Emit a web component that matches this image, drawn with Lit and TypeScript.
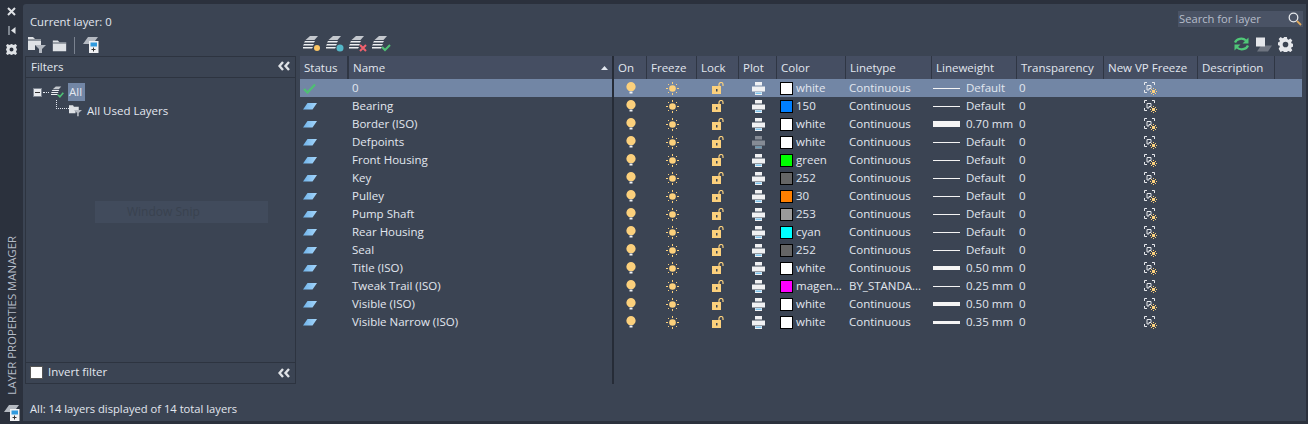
import { LitElement, html, css, svg } from 'lit';
import { customElement } from 'lit/decorators.js';

interface Layer {
  name: string;
  color: string;
  swatch: string;
  linetype?: string;
  weight: string;
  thick: number;
  plotOff?: boolean;
}

const LAYERS: Layer[] = [
  { name: '0', color: 'white', swatch: '#fff', weight: 'Default', thick: 1 },
  { name: 'Bearing', color: '150', swatch: '#007fff', weight: 'Default', thick: 1 },
  { name: 'Border (ISO)', color: 'white', swatch: '#fff', weight: '0.70 mm', thick: 6 },
  { name: 'Defpoints', color: 'white', swatch: '#fff', weight: 'Default', thick: 1, plotOff: true },
  { name: 'Front Housing', color: 'green', swatch: '#00ff00', weight: 'Default', thick: 1 },
  { name: 'Key', color: '252', swatch: '#656565', weight: 'Default', thick: 1 },
  { name: 'Pulley', color: '30', swatch: '#ff7f00', weight: 'Default', thick: 1 },
  { name: 'Pump Shaft', color: '253', swatch: '#9a9a9a', weight: 'Default', thick: 1 },
  { name: 'Rear Housing', color: 'cyan', swatch: '#00ffff', weight: 'Default', thick: 1 },
  { name: 'Seal', color: '252', swatch: '#656565', weight: 'Default', thick: 1 },
  { name: 'Title (ISO)', color: 'white', swatch: '#fff', weight: '0.50 mm', thick: 4 },
  { name: 'Tweak Trail (ISO)', color: 'magen...', swatch: '#ff00ff', linetype: 'BY_STANDA...', weight: '0.25 mm', thick: 1 },
  { name: 'Visible (ISO)', color: 'white', swatch: '#fff', weight: '0.50 mm', thick: 4 },
  { name: 'Visible Narrow (ISO)', color: 'white', swatch: '#fff', weight: '0.35 mm', thick: 3 },
];

const HEAD = ['On', 'Freeze', 'Lock', 'Plot', 'Color', 'Linetype', 'Lineweight', 'Transparency', 'New VP Freeze', 'Description', ''];

const stack = svg`
  <path d="M7 0h8l-3.500 4H2.500z" fill="#c4c8ce"/>
  <path d="M2 5h10l-1 1.500H1zM1 8h10l-1 1.500H0zM0 11h10l-1 1.500H0z" fill="#eceef1"/>`;

const folder = svg`<path d="M1 3h6l2 2h8v11H1z" fill="#dfe2e6"/><path d="M1 6h16" stroke="#3b4453"/>`;

const icons = {
  funnelFolder: html`<svg width="18" height="18" viewBox="0 0 18 18"><path d="M0 1h5l2 2h6v6H7v5H0z" fill="#dfe2e6"/><path d="M0 4h13" stroke="#3b4453"/><path d="M7 9h11l-4 4v4h-3v-4z" fill="#b4b9c1"/></svg>`,
  folder: html`<svg width="15" height="15" viewBox="0 0 18 18">${folder}</svg>`,
  manager: html`<svg width="16" height="16" viewBox="0 0 16 16"><path d="M5 0h10l-3 4h-2L8 7H0z" fill="#b4b9c1"/><rect x="6" y="4" width="9.500" height="12" fill="#f0f1f3"/><rect x="7.500" y="5.500" width="6.500" height="4" fill="#2f9ade"/><path d="M8.500 12.500h4M10.500 10.500v4" stroke="#333"/></svg>`,
  mini: html`<svg width="13" height="13" viewBox="0 0 16 15"><path d="M0 1h5l1 2h6v4H8v4H0z" fill="#dfe2e6"/><path d="M6 7h10l-4 3.500v4h-2v-4z" fill="#b4b9c1"/></svg>`,
  collapse: html`<svg width="13" height="10" viewBox="0 0 13 10"><path d="M5 1 1.500 5 5 9M11 1 7.500 5 11 9" fill="none" stroke="#dfe2e6" stroke-width="2.400"/></svg>`,
  search: html`<svg width="14" height="14" viewBox="0 0 14 14"><circle cx="5.500" cy="5.500" r="4.300" fill="none" stroke="#e6e8ec" stroke-width="1.300"/><path d="m9 9 4 4" stroke="#e0a95c" stroke-width="1.800"/></svg>`,
  refresh: html`<svg width="17" height="16" viewBox="0 0 17 15"><path d="M2 6a6.500 5.500 0 0 1 11-2" fill="none" stroke="#50c878" stroke-width="2.200"/><path d="M15.500 1v6h-6z" fill="#50c878"/><path d="M15 9a6.500 5.500 0 0 1-11 2" fill="none" stroke="#50c878" stroke-width="2.200"/><path d="M1.500 14V8h6z" fill="#50c878"/></svg>`,
  override: html`<svg width="16" height="15" viewBox="0 0 16 14"><path d="M5 8h11l-4 6H1z" fill="#6e7480"/><rect x="0" y="0" width="9" height="9" fill="#e4e6ea"/></svg>`,
  gear: html`<svg width="15" height="15" viewBox="0 0 16 16"><path fill="#e6e8ec" fill-rule="evenodd" d="M6.500 0h3l.4 2.200 1.400.6L13.200 1.500l2.100 2.100-1.300 1.900.6 1.400 2.200.4v3l-2.200.4-.6 1.400 1.300 1.900-2.100 2.100-1.900-1.300-1.400.6-.4 2.200h-3l-.4-2.200-1.400-.6-1.900 1.300L.7 12.400 2 10.500l-.6-1.400L0 8.700v-3l1.400-.2.600-1.400L.7 2.200 2.800.1l1.900 1.300 1.400-.6zM8 5a2.500 2.500 0 1 0 0 6 2.500 2.500 0 0 0 0-6z"/></svg>`,
  close: html`<svg width="9" height="9" viewBox="0 0 9 9"><path d="m1 1 7 7M8 1 1 8" stroke="#dfe2e6" stroke-width="2"/></svg>`,
  pin: html`<svg width="8" height="9" viewBox="0 0 8 9"><path d="M1 0v9" stroke="#9aa0aa" stroke-width="1.500"/><path d="M7.500 1v7L3 4.500z" fill="#dfe2e6"/></svg>`,
  props: html`<svg width="11" height="11" viewBox="0 0 11 11"><path fill="#dfe2e6" fill-rule="evenodd" d="M0 1.500 1.500 0l1.800 1L5.500 0l2.200 1 1.800-1L11 1.500l-1 1.800L11 5.500l-1 2.200 1 1.800L9.500 11l-1.800-1-2.200 1-2.200-1-1.800 1L0 9.500l1-1.800L0 5.500l1-2.200zM5.500 3.500a2 2 0 1 0 0 4 2 2 0 0 0 0-4z"/></svg>`,
  check: html`<svg width="13" height="11" viewBox="0 0 13 11"><path d="m1 6 3.500 3.500L12 1.500" fill="none" stroke="#4fbf74" stroke-width="2.400"/></svg>`,
  layer: html`<svg width="14" height="7" viewBox="0 0 14 7"><defs><linearGradient id="lg" x1="0" x2="1"><stop offset="0" stop-color="#6fb3ea"/><stop offset="1" stop-color="#a5d6fb"/></linearGradient></defs><path d="M4.500 0H14L9.500 6.500H0z" fill="url(#lg)"/></svg>`,
  bulb: html`<svg width="10" height="12" viewBox="0 0 10 12"><path d="M5 0a4.700 4.700 0 0 1 2.500 8.600V9h-5v-.4A4.700 4.700 0 0 1 5 0z" fill="#fbd07c"/><rect x="3.500" y="9.500" width="3" height="2" fill="#f2f3f5"/></svg>`,
  sun: html`<svg width="13" height="13" viewBox="0 0 13 13"><circle cx="6.500" cy="6.500" r="3.300" fill="#fbd07c"/><path d="M6.500 0v2M6.500 11v2M0 6.500h2M11 6.500h2M2 2l1 1M10 10l1 1M2 11l1-1M10 3l1-1" stroke="#fbd07c"/></svg>`,
  lock: html`<svg width="12" height="12" viewBox="0 0 12 12"><path d="M7 4V2.500a2 2 0 0 1 4 0V4" fill="none" stroke="#fbd07c" stroke-width="1.200"/><rect y="4" width="9" height="8" fill="#fbd07c"/><rect x="4" y="7" width="1.500" height="2.500" fill="#3b4453"/></svg>`,
  printer: (off?: boolean) => html`<svg width="13" height="13" viewBox="0 0 13 13"><g fill=${off ? '#858b95' : '#f0f1f3'}><rect x="3" y="0" width="7" height="3.500"/><rect x="0" y="4.500" width="13" height="5"/><rect x="3" y="10" width="7" height="3"/></g><rect x="3.500" y="10.500" width="6" height="1.500" fill=${off ? '#6a9ab5' : '#7cc4ee'}/></svg>`,
  vp: html`<svg width="13" height="13" viewBox="0 0 13 13"><path d="M3 .5H.5V3M8 .5h2.500V3M.5 8v2.500H3" fill="none" stroke="#e6e8ec"/><path d="M3 3.500h4v3H5v1.500H3z" fill="none" stroke="#e6e8ec"/><rect x="8" y="8" width="3" height="3" fill="#fbd07c"/><path d="M7 7h1v1H7zM11 7h1v1h-1zM7 11h1v1H7zM11 11h1v1h-1zM9 6h1v1H9zM9 12h1v1H9zM6 9h1v1H6zM12 9h1v1h-1z" fill="#fbd07c"/></svg>`,
};

const badge = (mark: unknown) => html`<svg width="19" height="16" viewBox="0 0 19 16">${stack}${mark}</svg>`;

@customElement('app-root')
export class AppRoot extends LitElement {
  static styles = css`
    :host {
      display: block;
      width: 1308px;
      height: 424px;
      font-family: 'Open Sans', 'Noto Sans', sans-serif;
      font-size: 11.500px;
      color: #e2e7ef;
      overflow: hidden;
    }

    svg { display: block; flex: none; }

    .window {
      display: flex;
      height: 100%;
      background: #2b313d;
      box-sizing: border-box;
      padding: 4px 2px 3px 0;
    }

    .strip {
      width: 23px;
      flex: none;
      display: flex;
      flex-direction: column;
      align-items: center;
      margin-top: -2px;
      box-sizing: border-box;
    }

    .strip-btn { height: 19px; display: flex; align-items: center; justify-content: center; }

    .strip-title {
      margin-top: auto;
      writing-mode: vertical-rl;
      transform: rotate(180deg);
      font-size: 11.400px;
      color: #b4bbc7;
      white-space: nowrap;
      margin-bottom: 10px;
    }

    .panel {
      flex: 1;
      min-width: 0;
      display: flex;
      flex-direction: column;
      background: #3b4453;
      border-top-left-radius: 3px;
    }

    .body { display: flex; height: 380px; flex: none; }

    .side {
      width: 271px;
      flex: none;
      margin-left: 2px;
      display: flex;
      flex-direction: column;
    }

    .current { height: 32px; padding: 10px 0 0 5px; box-sizing: border-box; font-size: 11.300px; line-height: 16px; }

    .tools { display: flex; align-items: center; height: 18px; padding-left: 3px; gap: 6px; flex: none; }
    .sep { width: 1px; height: 17px; background: #7a828f; margin: 0 2px 0 1px; }

    .filters {
      position: relative;
      flex: 1;
      margin-top: 2px;
      border: 1px solid #2d3440;
      display: flex;
      flex-direction: column;
      min-height: 0;
    }

    .filters-head {
      height: 21px;
      border-bottom: 1px solid #2d3440;
      display: flex;
      align-items: center;
      justify-content: space-between;
      padding: 0 4px 2px 5px;
      box-sizing: border-box;
      flex: none;
    }

    .tree { flex: 1; padding: 5px 0 0 7px; }

    .tree-row { display: flex; align-items: center; height: 18px; }

    .node {
      width: 7px;
      height: 7px;
      background: #e8eaee;
      border: 1px solid #7d8591;
      position: relative;
      margin-right: 1px;
      flex: none;
    }
    .node::after { content: ''; position: absolute; left: 1px; right: 1px; top: 3px; height: 1px; background: #333; }

    .dots { border-top: 1px dotted #e2e7ef; width: 6px; margin-right: 2px; }

    .all-label { background: #7286a5; padding: 0 3px 0 1px; margin-left: 4px; line-height: 18px; }

    .tree-sub { display: flex; align-items: center; height: 18px; padding-left: 23px; }
    .elbow { width: 13px; height: 9px; border-left: 1px dotted #e2e7ef; border-bottom: 1px dotted #e2e7ef; margin-top: -11px; flex: none; box-sizing: border-box; }
    .tree-sub span:last-child { margin-left: 5px; }

    .ghost {
      position: absolute;
      left: 69px;
      top: 144px;
      width: 173px;
      height: 22px;
      background: #414b5c;
      color: #39424f;
      font-size: 12px;
      line-height: 21px;
      padding-left: 32px;
      box-sizing: border-box;
    }

    .invert {
      height: 21px;
      border-top: 1px solid #2d3440;
      display: flex;
      align-items: center;
      padding: 0 4px 1px 4px;
      box-sizing: border-box;
      flex: none;
    }

    .box { width: 11px; height: 11px; background: #fff; border: 1px solid #555; margin-right: 5px; flex: none; }
    .invert-label { margin-bottom: 2px; }
    .invert .grow { flex: 1; }

    .main { flex: 1; min-width: 0; display: flex; flex-direction: column; padding: 0 4px; }

    .top { height: 30px; display: flex; justify-content: flex-end; padding-top: 7px; box-sizing: border-box; margin-right: -1px; }

    .search {
      width: 125px;
      height: 16px;
      background: #4a5365;
      color: #b6bdca;
      display: flex;
      align-items: center;
      justify-content: space-between;
      padding: 0 1px 1px;
      box-sizing: border-box;
      font-size: 11.200px;
    }

    .bar { display: flex; align-items: center; height: 20px; margin-bottom: 2px; padding-left: 3px; gap: 4px; flex: none; }
    .bar .right { margin-left: auto; display: flex; align-items: center; gap: 6px; padding-right: 9px; }

    .table { flex: 1; display: flex; min-height: 0; }

    .pane-l { width: 312px; flex: none; }
    .pane-r { flex: 1; min-width: 0; border-left: 2px solid #262c37; }

    .grid-l { display: grid; grid-template-columns: 49px 263px; }
    .grid-r { display: grid; grid-template-columns: 33px 50px 42px 38px 69px 86px 85px 87px 94px 77px 1fr; }

    .head { height: 23px; background: #454e62; }
    .head > div {
      display: flex;
      align-items: center;
      padding-left: 4px;
      border-right: 1px solid #2f3644;
      box-sizing: border-box;
    }
    .head > div:last-child { border-right: 0; }
    .pane-l .head > div:first-child { border-right: 2px solid #2f3644; }

    .sort { margin-left: auto; margin-right: 4px; }

    .row { height: 18px; align-items: center; }
    .row.on { background: #7286a5; }
    .row > div { display: flex; align-items: center; white-space: nowrap; min-width: 0; height: 18px; box-sizing: border-box; }

    .c-status { padding-left: 3px; }
    .c-name { padding: 0 0 2px 3px; }
    .c-icon { justify-content: center; }
    .c-vp { padding-right: 1px; }
    .c-color { padding: 0 0 0 3px; }
    .c-color span:last-child { margin-bottom: 2px; }
    .swatch { width: 11px; height: 11px; border: 1px solid #000; margin-right: 3px; flex: none; }
    .c-type { padding: 0 0 2px 3px; }
    .c-weight { padding-left: 1px; }
    .c-weight span:last-child { margin-bottom: 2px; }
    .stroke { width: 27px; background: #f4f4f4; margin-right: 6px; flex: none; }
    .c-trans { padding: 0 0 2px 2px; }

    .status { flex: none; height: 37px; padding: 17px 0 0 7px; box-sizing: border-box; line-height: 16px; font-size: 11.200px; }
  `;

  private renderRow(l: Layer, i: number) {
    const on = i === 0;
    return html`
      <div class="grid-r row ${on ? 'on' : ''}">
        <div class="c-icon">${icons.bulb}</div>
        <div class="c-icon">${icons.sun}</div>
        <div class="c-icon">${icons.lock}</div>
        <div class="c-icon">${icons.printer(l.plotOff)}</div>
        <div class="c-color"><span class="swatch" style="background:${l.swatch}"></span><span>${l.color}</span></div>
        <div class="c-type">${l.linetype ?? 'Continuous'}</div>
        <div class="c-weight"><span class="stroke" style="height:${l.thick}px"></span><span>${l.weight}</span></div>
        <div class="c-trans">0</div>
        <div class="c-icon c-vp">${icons.vp}</div>
        <div></div>
        <div></div>
      </div>`;
  }

  render() {
    return html`
      <div class="window">
        <div class="strip">
          <div class="strip-btn">${icons.close}</div>
          <div class="strip-btn">${icons.pin}</div>
          <div class="strip-btn">${icons.props}</div>
          <div class="strip-title">LAYER PROPERTIES MANAGER</div>
          <div>${icons.manager}</div>
        </div>
        <div class="panel">
          <div class="body">
            <div class="side">
              <div class="current">Current layer: 0</div>
              <div class="tools">
                ${icons.funnelFolder}${icons.folder}
                <span class="sep"></span>
                ${icons.manager}
              </div>
              <div class="filters">
                <div class="filters-head">Filters ${icons.collapse}</div>
                <div class="tree">
                  <div class="tree-row">
                    <span class="node"></span><span class="dots"></span>
                    <svg width="13" height="14" viewBox="0 0 19 16">${stack}<path d="m10 12 3 3 5-6" fill="none" stroke="#4fbf74" stroke-width="2.400"/></svg>
                    <span class="all-label">All</span>
                  </div>
                  <div class="tree-sub"><span class="elbow"></span>${icons.mini}<span>All Used Layers</span></div>
                </div>
                <div class="ghost">Window Snip</div>
                <div class="invert"><span class="box"></span><span class="invert-label">Invert filter</span><span class="grow"></span>${icons.collapse}</div>
              </div>
            </div>
            <div class="main">
              <div class="top">
                <div class="search">Search for layer ${icons.search}</div>
              </div>
              <div class="bar">
                ${badge(svg`<circle cx="14" cy="12" r="3" fill="#fbc564"/>`)}
                ${badge(svg`<circle cx="14" cy="12" r="3.500" fill="#54b7c8"/>`)}
                ${badge(svg`<path d="m11 9 6 6M17 9l-6 6" stroke="#f0616d" stroke-width="2"/>`)}
                ${badge(svg`<path d="m10 11 3 3 5-5" fill="none" stroke="#4fbf74" stroke-width="2"/>`)}
                <div class="right">${icons.refresh}${icons.override}${icons.gear}</div>
              </div>
              <div class="table">
                <div class="pane-l">
                  <div class="grid-l head">
                    <div>Status</div>
                    <div>Name
                      <svg class="sort" width="7" height="4" viewBox="0 0 7 4"><path d="M3.500 0 7 4H0z" fill="#e2e7ef"/></svg>
                    </div>
                  </div>
                  ${LAYERS.map((l, i) => html`
                    <div class="grid-l row ${i === 0 ? 'on' : ''}">
                      <div class="c-status">${i === 0 ? icons.check : icons.layer}</div>
                      <div class="c-name">${l.name}</div>
                    </div>`)}
                </div>
                <div class="pane-r">
                  <div class="grid-r head">${HEAD.map((h) => html`<div>${h}</div>`)}</div>
                  ${LAYERS.map((l, i) => this.renderRow(l, i))}
                </div>
              </div>
            </div>
          </div>
          <div class="status">All: 14 layers displayed of 14 total layers</div>
        </div>
      </div>
    `;
  }
}
